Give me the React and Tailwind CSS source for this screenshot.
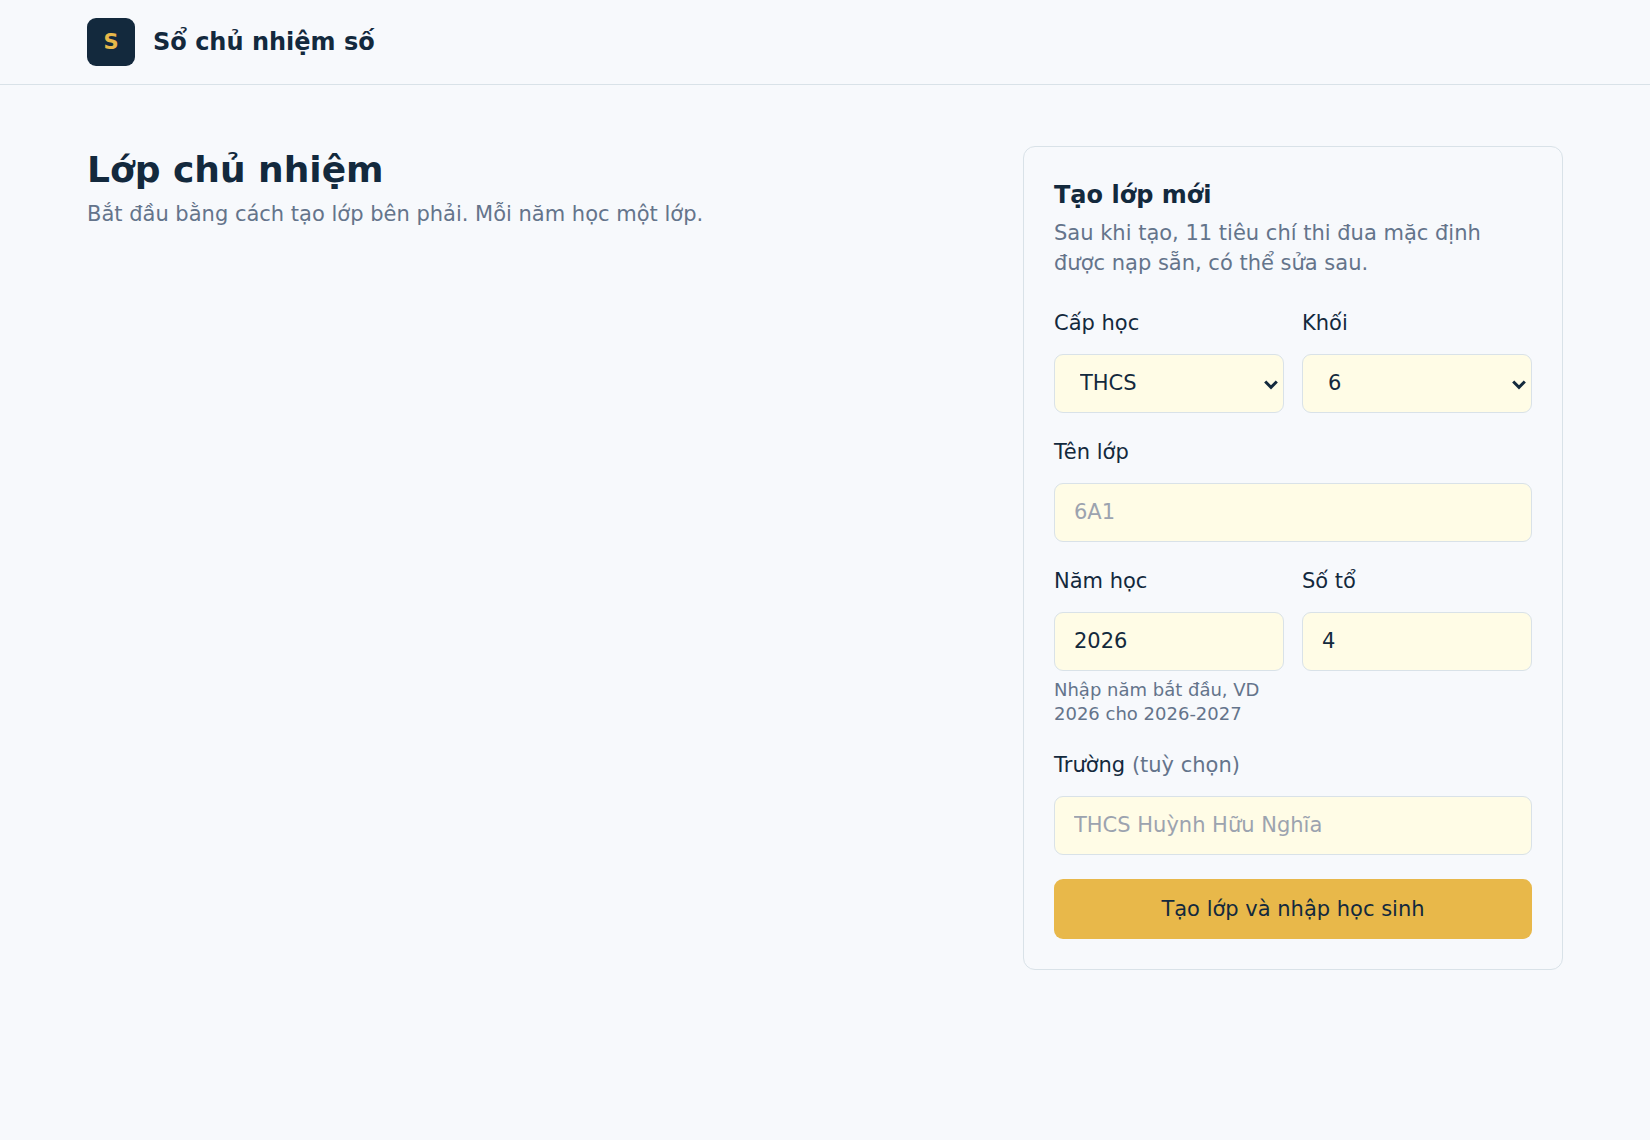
const field =
  "block w-full h-[59px] rounded-[9px] border border-[#d9e2e8] bg-[#fffce6] pb-px text-[#13293d] placeholder:text-[#9ca3af]";
const input = `${field} px-[19px]`;

function Field({ id, label, note, hint, children }) {
  return (
    <div>
      <label htmlFor={id} className="mb-4 block leading-[30px]">
        {label}
        {note && <span className="text-[#64748b]"> {note}</span>}
      </label>
      {children}
      {hint && <p className="mt-[7px] text-[18px] leading-[24px] text-[#64748b]">{hint}</p>}
    </div>
  );
}

function Select({ id, value }) {
  return (
    <div className="relative">
      <select id={id} className={`${field} appearance-none pl-[25px] pr-10`}>
        <option>{value}</option>
      </select>
      <svg
        viewBox="0 0 14 10"
        className="pointer-events-none absolute right-[6px] top-[26px] h-[10px] w-[14px]"
        fill="none"
        stroke="#13293d"
        strokeWidth="3"
        aria-hidden="true"
      >
        <path d="M1.2 1.5 7 7.3l5.8-5.8" />
      </svg>
    </div>
  );
}

export default function App() {
  return (
    <div className="min-h-screen bg-[#f7f9fc] font-['DejaVu_Sans',sans-serif] text-[21px] leading-[30px] text-[#13293d]">
      <header className="border-b border-[#d9e2e8]">
        <div className="mx-auto flex h-[84px] max-w-[1476px] items-center gap-[18px]">
          <span className="flex h-12 w-12 items-center justify-center rounded-[9px] bg-[#13293d] pb-px font-bold text-[#e8b84a]">
            S
          </span>
          <span className="text-[24px] font-bold">Sổ chủ nhiệm số</span>
        </div>
      </header>
      <main className="mx-auto grid max-w-[1476px] grid-cols-[1fr_540px] items-start gap-12 pt-[61px]">
        <section>
          <h1 className="text-[36px] font-bold leading-[48px]">Lớp chủ nhiệm</h1>
          <p className="mt-[5px] text-[#64748b]">
            Bắt đầu bằng cách tạo lớp bên phải. Mỗi năm học một lớp.
          </p>
        </section>
        <section className="rounded-xl border border-[#d9e2e8] p-[30px]">
          <h2 className="text-[24px] font-bold leading-[36px]">Tạo lớp mới</h2>
          <p className="mt-[5px] text-[#64748b]">
            Sau khi tạo, 11 tiêu chí thi đua mặc định được nạp sẵn, có thể sửa sau.
          </p>
          <form className="mt-[30px] flex flex-col gap-6">
            <div className="grid grid-cols-2 gap-[18px]">
              <Field id="level" label="Cấp học">
                <Select id="level" value="THCS" />
              </Field>
              <Field id="grade" label="Khối">
                <Select id="grade" value="6" />
              </Field>
            </div>
            <Field id="name" label="Tên lớp">
              <input id="name" placeholder="6A1" className={input} />
            </Field>
            <div className="grid grid-cols-2 gap-[18px]">
              <Field id="year" label="Năm học" hint="Nhập năm bắt đầu, VD 2026 cho 2026-2027">
                <input id="year" defaultValue="2026" className={input} />
              </Field>
              <Field id="groups" label="Số tổ">
                <input id="groups" defaultValue="4" className={input} />
              </Field>
            </div>
            <Field id="school" label="Trường" note="(tuỳ chọn)">
              <input id="school" placeholder="THCS Huỳnh Hữu Nghĩa" className={input} />
            </Field>
            <button type="button" className="h-[60px] rounded-[9px] bg-[#e8b84a]">
              Tạo lớp và nhập học sinh
            </button>
          </form>
        </section>
      </main>
    </div>
  );
}
